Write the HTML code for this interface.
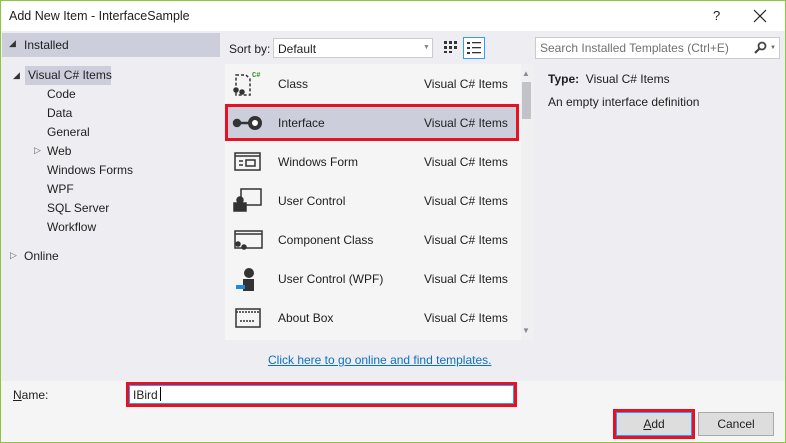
<!DOCTYPE html>
<html><head><style>
*{margin:0;padding:0;box-sizing:border-box}
body{width:786px;height:443px;overflow:hidden;font-family:"Liberation Sans",sans-serif;font-size:12px;color:#1e1e1e;background:#eeeef2;position:relative}
.a{position:absolute;white-space:nowrap}
</style></head><body>
<div class="a" style="left:0;top:0;width:786px;height:443px;border:1px solid #8cc63f"></div>
<div class="a" style="left:1px;top:1px;width:784px;height:30px;background:#fff"></div>
<div class="a" style="left:9px;top:9px;font-size:12.5px">Add New Item - InterfaceSample</div>
<div class="a" style="left:713px;top:8px;font-size:13px">?</div>
<svg class="a" style="left:753px;top:9px" width="14" height="14"><path d="M1 1 L13 13 M13 1 L1 13" stroke="#222" stroke-width="1.2"/></svg>

<!-- left tree -->
<div class="a" style="left:2px;top:33px;width:218px;height:24px;background:#cccedb"></div>
<div class="a" style="left:9px;top:38px;font-size:9px;color:#333">◢</div>
<div class="a" style="left:24px;top:38px">Installed</div>
<div class="a" style="left:25px;top:66px;width:86px;height:19px;background:#cccedb"></div>
<div class="a" style="left:13px;top:70px;font-size:9px;color:#333">◢</div>
<div class="a" style="left:28px;top:68px">Visual C# Items</div>
<div class="a" style="left:47px;top:87px">Code</div>
<div class="a" style="left:47px;top:106px">Data</div>
<div class="a" style="left:47px;top:125px">General</div>
<div class="a" style="left:34px;top:145px;font-size:9px;color:#666">▷</div>
<div class="a" style="left:47px;top:144px">Web</div>
<div class="a" style="left:47px;top:163px">Windows Forms</div>
<div class="a" style="left:47px;top:182px">WPF</div>
<div class="a" style="left:47px;top:201px">SQL Server</div>
<div class="a" style="left:47px;top:220px">Workflow</div>
<div class="a" style="left:10px;top:250px;font-size:9px;color:#666">▷</div>
<div class="a" style="left:24px;top:249px">Online</div>

<!-- toolbar -->
<div class="a" style="left:229px;top:42px">Sort by:</div>
<div class="a" style="left:273px;top:38px;width:160px;height:20px;background:#fff;border:1px solid #ccc"></div>
<div class="a" style="left:278px;top:42px">Default</div>
<div class="a" style="left:423px;top:44px;font-size:7px;color:#888">▼</div>
<svg class="a" style="left:441px;top:38px" width="20" height="20"><g fill="#333"><rect x="3" y="3" width="3" height="3"/><rect x="8" y="3" width="3" height="3"/><rect x="13" y="3" width="3" height="3"/><rect x="3" y="8" width="3" height="3"/><rect x="8" y="8" width="3" height="3"/><rect x="13" y="8" width="3" height="3"/><rect x="3" y="13" width="3" height="2"/><rect x="8" y="13" width="3" height="2"/></g></svg>
<svg class="a" style="left:463px;top:37px" width="22" height="22"><rect x="0.5" y="0.5" width="21" height="21" fill="#fff" stroke="#3399ff"/><g fill="#333"><rect x="4" y="5" width="3" height="2"/><rect x="9" y="5" width="9" height="1.3"/><rect x="4" y="10" width="3" height="2"/><rect x="9" y="10" width="9" height="1.3"/><rect x="4" y="15" width="3" height="2"/><rect x="9" y="15" width="9" height="1.3"/></g></svg>
<div class="a" style="left:535px;top:37px;width:245px;height:22px;background:#fff;border:1px solid #ccc"></div>
<div class="a" style="left:540px;top:41px;color:#717171">Search Installed Templates (Ctrl+E)</div>
<svg class="a" style="left:753px;top:40px" width="16" height="16"><circle cx="9" cy="6" r="3.5" fill="none" stroke="#444" stroke-width="1.8"/><path d="M6.5 8.5 L2 13" stroke="#444" stroke-width="2.2"/></svg>
<div class="a" style="left:770px;top:45px;font-size:6px;color:#666">▼</div>

<!-- list -->
<div class="a" style="left:225px;top:64px;width:309px;height:276px;background:#f5f5f5"></div>
<div class="a" style="left:521px;top:64px;width:13px;height:276px;background:#f0f0f0"></div>
<div class="a" style="left:522px;top:82px;width:9px;height:37px;background:#c2c3c9"></div>
<div class="a" style="left:522px;top:69px;font-size:8px;color:#868999">▲</div>
<div class="a" style="left:522px;top:326px;font-size:8px;color:#868999">▼</div>
<div class="a" style="left:225px;top:104px;width:294px;height:37px;background:#cccedb;border:3px solid #e81123"></div>

<div class="a" style="left:278px;top:77px">Class</div><div class="a" style="left:424px;top:77px">Visual C# Items</div>
<div class="a" style="left:278px;top:116px">Interface</div><div class="a" style="left:424px;top:116px">Visual C# Items</div>
<div class="a" style="left:278px;top:155px">Windows Form</div><div class="a" style="left:424px;top:155px">Visual C# Items</div>
<div class="a" style="left:278px;top:194px">User Control</div><div class="a" style="left:424px;top:194px">Visual C# Items</div>
<div class="a" style="left:278px;top:233px">Component Class</div><div class="a" style="left:424px;top:233px">Visual C# Items</div>
<div class="a" style="left:278px;top:272px">User Control (WPF)</div><div class="a" style="left:424px;top:272px">Visual C# Items</div>
<div class="a" style="left:278px;top:311px">About Box</div><div class="a" style="left:424px;top:311px">Visual C# Items</div>

<svg class="a" style="left:232px;top:70px" width="32" height="260" fill="none" stroke="#333" stroke-width="1.5">
<path d="M4 5 h10 l4 4 v16 h-14z" stroke-dasharray="3 2"/><text x="20" y="7" font-size="7" fill="#388a34" stroke="none" font-weight="bold" font-family="Liberation Mono">C#</text>
<circle cx="4" cy="20" r="2" fill="#333"/><circle cx="10" cy="22" r="2" fill="#333"/>
<g transform="translate(0,39)"><circle cx="5" cy="14" r="3.5" fill="#333"/><path d="M8 14 h9" stroke-width="2.5"/><circle cx="23" cy="14" r="5" stroke-width="4" fill="#fff"/></g>
<g transform="translate(0,78)"><rect x="3" y="5" width="25" height="17"/><path d="M3 8 h25 M7 13 h4 M7 17 h4 M14 12 h9 v6 h-9z"/></g>
<g transform="translate(0,117)"><rect x="9" y="2" width="20" height="16"/><rect x="2" y="16" width="12" height="8" fill="#333"/><circle cx="8" cy="13" r="3" fill="#333"/></g>
<g transform="translate(0,156)"><rect x="3" y="5" width="27" height="17"/><path d="M3 8 h27"/><circle cx="6" cy="18" r="2" fill="#333"/><circle cx="12" cy="21" r="2" fill="#333"/></g>
<g transform="translate(0,195)"><circle cx="17" cy="8" r="5" fill="#333" stroke="none"/><rect x="11" y="14" width="11" height="12" fill="#333" stroke="none"/><rect x="4" y="20" width="9" height="4" fill="#1e88e5" stroke="none"/></g>
<g transform="translate(0,234)"><rect x="4" y="5" width="24" height="18"/><path d="M4 8 h24 M8 17 h14" stroke-dasharray="2 1"/></g>
</svg>

<!-- right info -->
<div class="a" style="left:548px;top:72px"><b>Type:</b>&nbsp; Visual C# Items</div>
<div class="a" style="left:548px;top:95px">An empty interface definition</div>

<div class="a" style="left:268px;top:353px;color:#0e70c0;text-decoration:underline">Click here to go online and find templates.</div>

<!-- bottom -->
<div class="a" style="left:1px;top:381px;width:784px;height:61px;background:#f5f5f5"></div>
<div class="a" style="left:13px;top:388px"><u>N</u>ame:</div>
<div class="a" style="left:126px;top:382px;width:391px;height:25px;border:3px solid #e81123;background:#fff"></div>
<div class="a" style="left:129px;top:385px;width:385px;height:19px;border:1px solid #3399ff"></div>
<div class="a" style="left:133px;top:388px">IBird</div>
<div class="a" style="left:160px;top:387px;width:1px;height:14px;background:#000"></div>
<div class="a" style="left:613px;top:409px;width:82px;height:30px;border:3px solid #e81123"></div>
<div class="a" style="left:616px;top:412px;width:76px;height:24px;background:#dddddd;border:1px solid #3399ff;text-align:center;line-height:22px"><u>A</u>dd</div>
<div class="a" style="left:698px;top:412px;width:76px;height:24px;background:#dddddd;border:1px solid #aaa;text-align:center;line-height:22px">Cancel</div>
</body></html>
